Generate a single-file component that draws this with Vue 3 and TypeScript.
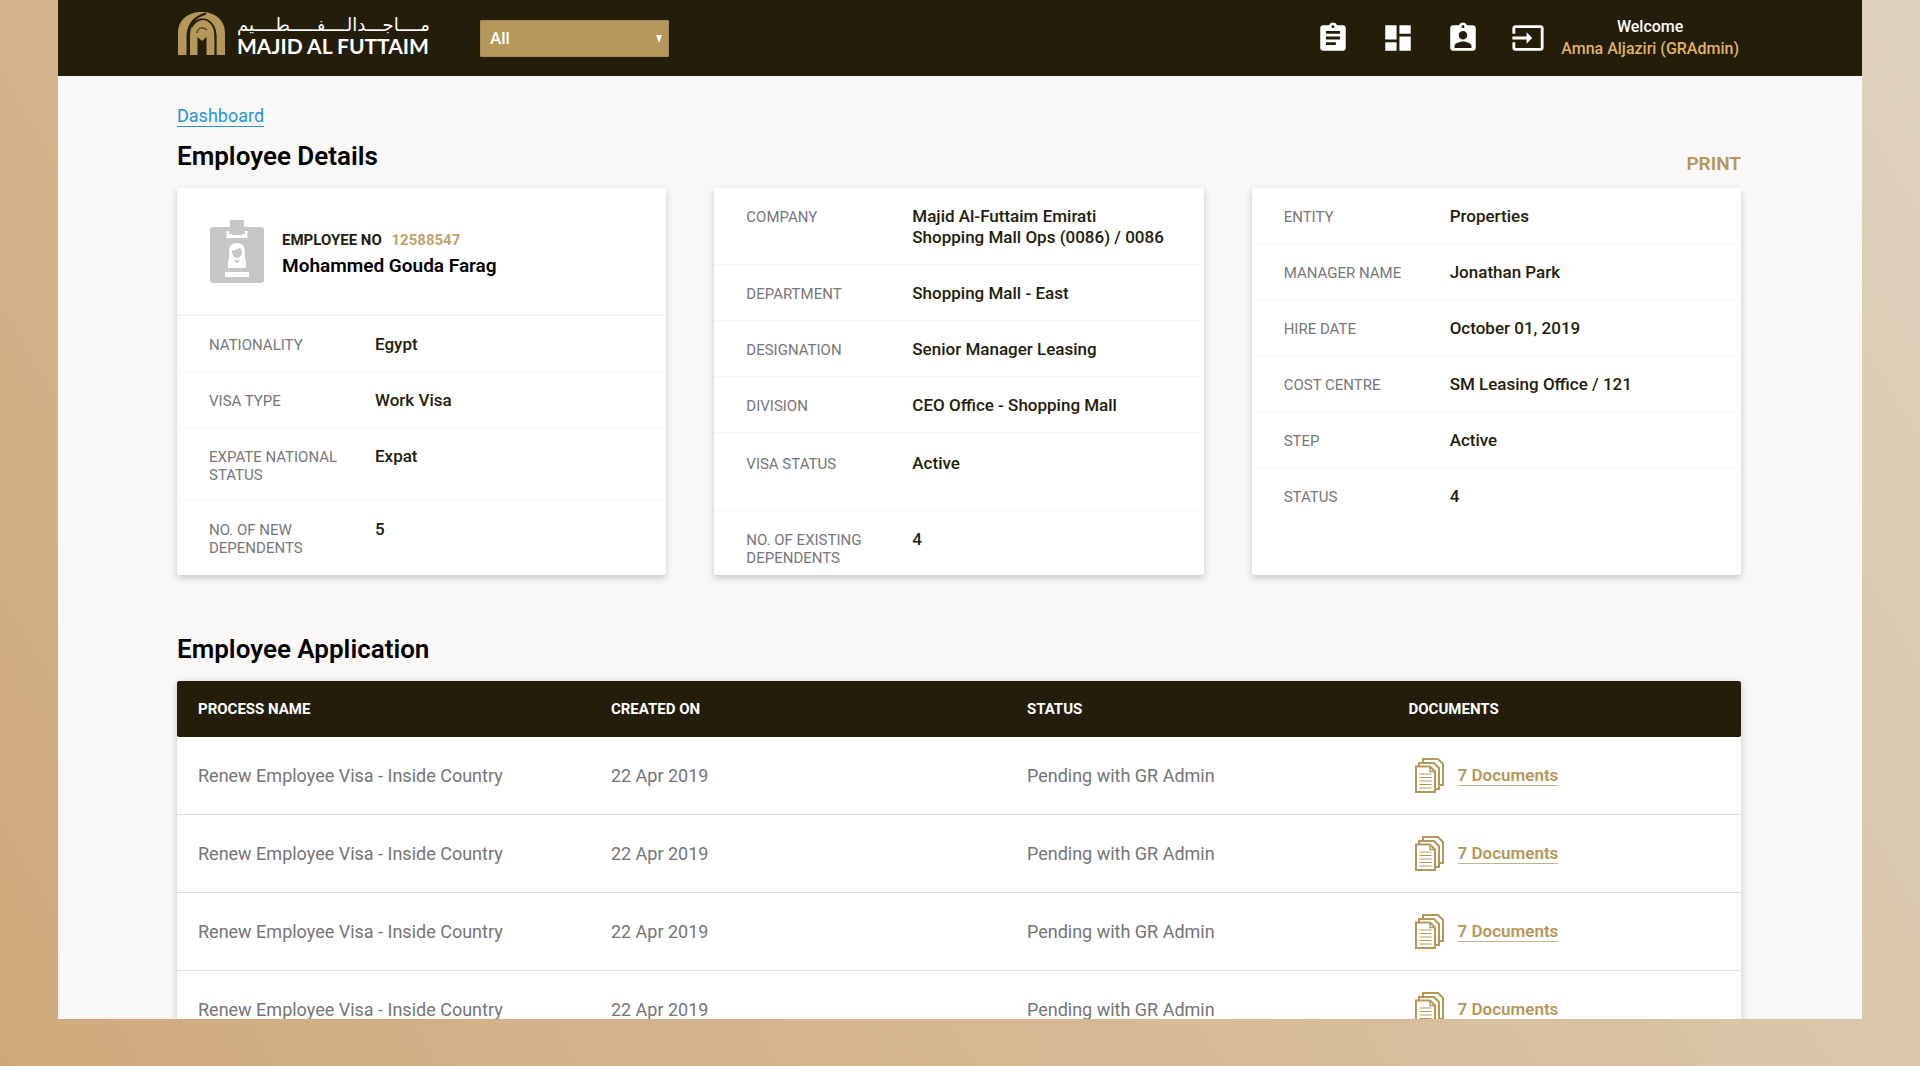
<script setup lang="ts">
import { ref } from 'vue'

interface Field {
  label: string
  value: string
  tall?: boolean
}

interface Application {
  process: string
  created: string
  status: string
  documents: number
}

const scope = ref('All')

const personal: Field[] = [
  { label: 'NATIONALITY', value: 'Egypt' },
  { label: 'VISA TYPE', value: 'Work Visa' },
  { label: 'EXPATE NATIONAL STATUS', value: 'Expat' },
  { label: 'NO. OF NEW DEPENDENTS', value: '5' },
]

const company: Field[] = [
  { label: 'COMPANY', value: 'Majid Al-Futtaim Emirati Shopping Mall Ops (0086) / 0086' },
  { label: 'DEPARTMENT', value: 'Shopping Mall - East' },
  { label: 'DESIGNATION', value: 'Senior Manager Leasing' },
  { label: 'DIVISION', value: 'CEO Office - Shopping Mall' },
  { label: 'VISA STATUS', value: 'Active', tall: true },
  { label: 'NO. OF EXISTING DEPENDENTS', value: '4' },
]

const employment: Field[] = [
  { label: 'ENTITY', value: 'Properties' },
  { label: 'MANAGER NAME', value: 'Jonathan Park' },
  { label: 'HIRE DATE', value: 'October 01, 2019' },
  { label: 'COST CENTRE', value: 'SM Leasing Office / 121' },
  { label: 'STEP', value: 'Active' },
  { label: 'STATUS', value: '4' },
]

const cards: Field[][] = [personal, company, employment]

const applications: Application[] = Array.from({ length: 4 }, () => ({
  process: 'Renew Employee Visa - Inside Country',
  created: '22 Apr 2019',
  status: 'Pending with GR Admin',
  documents: 7,
}))

const navItems = [
  {
    name: 'Applications',
    path: 'M19 3h-4.18C14.4 1.84 13.3 1 12 1c-1.3 0-2.4.84-2.82 2H5c-1.1 0-2 .9-2 2v14c0 1.1.9 2 2 2h14c1.1 0 2-.9 2-2V5c0-1.1-.9-2-2-2zm-7 0c.55 0 1 .45 1 1s-.45 1-1 1-1-.45-1-1 .45-1 1-1zm2 14H7v-2h7v2zm3-4H7v-2h10v2zm0-4H7V7h10v2z',
  },
  { name: 'Overview', path: 'M3 13h8V3H3v10zm0 8h8v-6H3v6zm10 0h8V11h-8v10zm0-18v6h8V3h-8z' },
  {
    name: 'Employees',
    path: 'M19 3h-4.18C14.4 1.84 13.3 1 12 1c-1.3 0-2.4.84-2.82 2H5c-1.1 0-2 .9-2 2v14c0 1.1.9 2 2 2h14c1.1 0 2-.9 2-2V5c0-1.1-.9-2-2-2zm-7 0c.55 0 1 .45 1 1s-.45 1-1 1-1-.45-1-1 .45-1 1-1zm0 4c1.66 0 3 1.34 3 3s-1.34 3-3 3-3-1.34-3-3 1.34-3 3-3zm6 12H6v-1.4c0-2 4-3.1 6-3.1s6 1.1 6 3.1V19z',
  },
  {
    name: 'Log out',
    path: 'M21 3.01H3c-1.1 0-2 .9-2 2V9h2V4.99h18v14.03H3V15H1v4.01c0 1.1.9 1.98 2 1.98h18c1.1 0 2-.88 2-1.98v-14c0-1.11-.9-2-2-2zM11 16l4-4-4-4v3H1v2h10v3z',
  },
]
</script>

<template>
  <div class="page">
    <div class="window">
      <header class="topbar">
        <a class="brand" href="#">
          <svg class="brand-mark" viewBox="0 0 47 43" aria-hidden="true">
            <path d="M0 43V21C0 8 10 0 23.500 0C37 0 47 8 47 21V43H38.500V23C38 13 31 7 23 6.500C14 8 8.500 14 8.500 24V43Z" fill="#b5975a" />
            <path d="M12 43V24C12 14 17 7 25 7C32 8 36.500 15 36.500 24V43H28.500V25L24 29L19.500 25V43Z" fill="#b5975a" />
            <path d="M10.200 43V23C10.200 12 16 5 28 1.500" fill="none" stroke="#231d09" stroke-width="2" />
            <path d="M13.500 15C18 8 24 6 29 8C35 11 37.500 17 37.500 24V43" fill="none" stroke="#231d09" stroke-width="1.500" />
            <path d="M19 21C19.500 16 24 14 29 18" fill="none" stroke="#231d09" stroke-width="1" />
          </svg>
          <span class="brand-name">
            <span class="brand-ar" lang="ar" dir="rtl">مــــاجـــدالــــفـــــطــــيم</span>
            <span class="brand-en">MAJID AL FUTTAIM</span>
          </span>
        </a>
        <span class="scope">
          <select v-model="scope" aria-label="Scope">
            <option>All</option>
          </select>
          <svg class="caret" viewBox="0 0 6 8" aria-hidden="true"><path d="M0 0H6L3 8Z" fill="#fff" /></svg>
        </span>
        <nav class="nav">
          <a v-for="item in navItems" :key="item.name" href="#" :aria-label="item.name">
            <svg viewBox="0 0 24 24"><path :d="item.path" fill="#fff" /></svg>
          </a>
        </nav>
        <p class="user">Welcome<br /><span>Amna Aljaziri (GRAdmin)</span></p>
      </header>

      <main class="content">
        <a class="crumb" href="#">Dashboard</a>
        <div class="title-row">
          <h1>Employee Details</h1>
          <button class="print" type="button">PRINT</button>
        </div>

        <section class="cards">
          <article v-for="(fields, index) in cards" :key="index" class="card">
            <div v-if="index === 0" class="person">
              <svg class="badge" viewBox="0 0 54 63" aria-hidden="true">
                <rect y="7" width="54" height="56" rx="3" fill="#c6c6c6" />
                <path d="M16.500 11V18H37.500V11H35V14H19V11Z" fill="#fff" />
                <path d="M20 0H34V13L32 15H22L20 13Z" fill="#c6c6c6" />
                <path d="M27 23C21.500 23 19 27 19 31C19 35 20 37 18 41V48H36V41C34 37 35 35 35 31C35 27 32.500 23 27 23Z" fill="#fff" />
                <path d="M22 30.500C25 30.500 28 29.500 30 27.500C30.500 29.500 32 30 32 31C32 35 30 38 27 38C24 38 22 35 22 30.500Z" fill="#c6c6c6" />
                <path d="M24 40H30L27 43.500Z" fill="#c6c6c6" />
                <rect x="15" y="52" width="24" height="5" fill="#fff" />
              </svg>
              <div class="person-text">
                <p class="person-no">EMPLOYEE NO <span>12588547</span></p>
                <p class="person-name">Mohammed Gouda Farag</p>
              </div>
            </div>
            <dl>
              <div v-for="field in fields" :key="field.label" class="field" :class="{ tall: field.tall }">
                <dt>{{ field.label }}</dt>
                <dd>{{ field.value }}</dd>
              </div>
            </dl>
          </article>
        </section>

        <h2>Employee Application</h2>
        <table class="applications">
          <thead>
            <tr>
              <th scope="col" class="col-process">PROCESS NAME</th>
              <th scope="col" class="col-created">CREATED ON</th>
              <th scope="col" class="col-status">STATUS</th>
              <th scope="col">DOCUMENTS</th>
            </tr>
          </thead>
          <tbody>
            <tr v-for="(row, index) in applications" :key="index">
              <td>{{ row.process }}</td>
              <td>{{ row.created }}</td>
              <td>{{ row.status }}</td>
              <td>
                <div class="documents">
                  <svg viewBox="0 0 29 35" aria-hidden="true">
                    <g fill="#fff" stroke="#b5975a" stroke-width="2">
                      <path d="M8 5V1H23L28 6V27H24" />
                      <path d="M4 9V5H19L24 10V31H20" />
                      <path d="M1 8.500H15L20 13.500V34H1Z" />
                    </g>
                    <path d="M15 8.500V13.500H20" fill="none" stroke="#b5975a" stroke-width="1.500" />
                    <path d="M4.500 16H16.500M4.500 19.500H16.500M4.500 23H16.500M4.500 26.500H16.500M4.500 30H16.500" stroke="#b5975a" stroke-width="1" />
                  </svg>
                  <a href="#">{{ row.documents }} Documents</a>
                </div>
              </td>
            </tr>
          </tbody>
        </table>
      </main>
    </div>
  </div>
</template>

<style>
body {
  margin: 0;
}
</style>

<style scoped>
.page {
  box-sizing: border-box;
  height: 100vh;
  padding: 0 58px 47px;
  background: linear-gradient(60deg, #cea87a 0%, #d4b38c 24%, #d7bb97 50%, #dac7ac 76%, #dfd2bf 100%);
  font-family: Roboto, 'Liberation Sans', sans-serif;
  color: #231d09;
}

.page * {
  box-sizing: border-box;
}

.window {
  height: 100%;
  overflow: hidden;
  background: #f9f8f6;
}

h1,
h2,
p,
dl,
dd {
  margin: 0;
}

.topbar {
  display: flex;
  align-items: center;
  height: 76px;
  padding: 0 123px 0 120px;
  background: #231d09;
}

.brand {
  display: flex;
  align-items: flex-end;
  gap: 12px;
  width: 302px;
  height: 43px;
  margin-bottom: 10px;
  color: #fff;
  text-decoration: none;
}

.brand-mark {
  width: 47px;
  height: 43px;
}

.brand-name {
  display: flex;
  flex-direction: column;
  white-space: nowrap;
}

.brand-ar {
  font: 18px/24px 'DejaVu Sans', sans-serif;
  text-align: left;
}

.brand-en {
  font: 700 21px/18px Lato, sans-serif;
}

.scope {
  position: relative;
}

.scope select {
  display: block;
  width: 189px;
  height: 37px;
  padding: 0 9px;
  border: 1px solid #a58c58;
  border-radius: 1px;
  background: #b5975a;
  color: #fff;
  font: 500 17px/20px Roboto, sans-serif;
  appearance: none;
}

.caret {
  position: absolute;
  top: 15px;
  right: 7px;
  width: 6px;
  height: 8px;
  pointer-events: none;
}

.nav {
  display: flex;
  gap: 31px;
  margin-left: auto;
}

.nav a,
.nav svg {
  display: block;
  width: 34px;
  height: 34px;
}

.user {
  margin-left: 16px;
  color: #fff;
  font-size: 16px;
  font-weight: 500;
  line-height: 22px;
  text-align: center;
}

.user span {
  color: #e0b467;
}

.content {
  padding: 30px 121px 0 119px;
}

.crumb {
  display: inline-block;
  border-bottom: 1px solid #2a93d5;
  color: #2a93d5;
  font-size: 18px;
  line-height: 20px;
  text-decoration: none;
}

.title-row {
  display: flex;
  align-items: center;
  justify-content: space-between;
  margin-top: 9px;
  padding-bottom: 12px;
}

h1,
h2 {
  color: #000;
  font-size: 26px;
  font-weight: 600;
  line-height: 40px;
}

.print {
  margin-top: 16px;
  padding: 0;
  border: 0;
  background: none;
  color: #b5975a;
  font: 600 19px/24px Roboto, sans-serif;
}

.cards {
  display: grid;
  grid-template-columns: repeat(3, 1fr);
  gap: 48px;
}

.card {
  border-radius: 2px;
  background: #fff;
  box-shadow: 0 3px 7px rgba(0, 0, 0, 0.2);
}

.person {
  display: flex;
  align-items: center;
  gap: 18px;
  height: 128px;
  padding: 0 33px;
  border-bottom: 1px solid #f0f0f0;
}

.badge {
  width: 54px;
  height: 63px;
}

.person-text {
  padding-top: 5px;
}

.person-no {
  font-size: 15px;
  font-weight: 700;
  line-height: 24px;
}

.person-no span {
  margin-left: 6px;
  color: #c3a26b;
}

.person-name {
  color: #000;
  font-size: 19px;
  font-weight: 600;
  line-height: 28px;
}

.field {
  display: grid;
  grid-template-columns: 150px 1fr;
  column-gap: 16px;
  align-items: baseline;
  padding: 18px 32px 16px;
  border-bottom: 1px solid #f6f6f6;
}

.field:last-child {
  padding-bottom: 8px;
  border-bottom: 0;
}

.field.tall {
  min-height: 78px;
  padding-top: 20px;
}

dt {
  color: #777;
  font-size: 15px;
  line-height: 18px;
}

dd {
  font-size: 17px;
  font-weight: 500;
  line-height: 21px;
}

h2 {
  margin-top: 54px;
  margin-bottom: 12px;
}

.applications {
  width: 100%;
  border-collapse: separate;
  border-spacing: 0;
  table-layout: fixed;
  background: #fff;
  box-shadow: 0 2px 8px rgba(0, 0, 0, 0.2);
}

.col-process {
  width: 26.4%;
}

.col-created {
  width: 26.6%;
}

.col-status {
  width: 24.4%;
}

th {
  height: 56px;
  padding: 0 21px;
  background: #231d09;
  color: #fff;
  font-size: 15px;
  font-weight: 700;
  text-align: left;
}

th:first-child {
  border-radius: 2px 0 0 2px;
}

th:last-child {
  border-radius: 0 2px 2px 0;
}

td {
  height: 78px;
  padding: 0 21px;
  border-bottom: 1px solid #dcdcdc;
  color: #757575;
  font-size: 18px;
}

.documents {
  display: flex;
  align-items: center;
  gap: 14px;
  padding-left: 6px;
}

.documents svg {
  width: 29px;
  height: 35px;
}

.documents a {
  border-bottom: 1px solid #c9b48a;
  color: #b5975a;
  font-size: 17px;
  font-weight: 600;
  line-height: 19px;
  text-decoration: none;
}
</style>
